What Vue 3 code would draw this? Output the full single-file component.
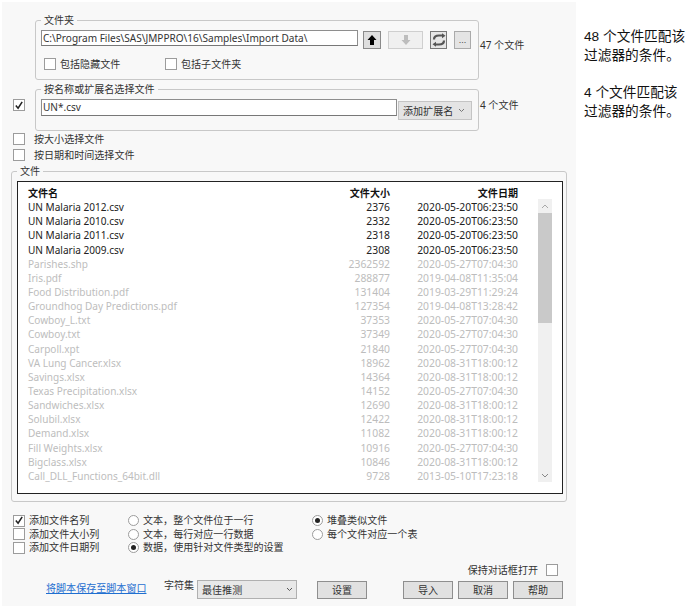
<script setup>
const dark = [
  ['UN Malaria 2012.csv', '2376', '2020-05-20T06:23:50'],
  ['UN Malaria 2010.csv', '2332', '2020-05-20T06:23:50'],
  ['UN Malaria 2011.csv', '2318', '2020-05-20T06:23:50'],
  ['UN Malaria 2009.csv', '2308', '2020-05-20T06:23:50'],
]
const grey = [
  ['Parishes.shp', '2362592', '2020-05-27T07:04:30'],
  ['Iris.pdf', '288877', '2019-04-08T11:35:04'],
  ['Food Distribution.pdf', '131404', '2019-03-29T11:29:24'],
  ['Groundhog Day Predictions.pdf', '127354', '2019-04-08T13:28:42'],
  ['Cowboy_L.txt', '37353', '2020-05-27T07:04:30'],
  ['Cowboy.txt', '37349', '2020-05-27T07:04:30'],
  ['Carpoll.xpt', '21840', '2020-05-27T07:04:30'],
  ['VA Lung Cancer.xlsx', '18962', '2020-08-31T18:00:12'],
  ['Savings.xlsx', '14364', '2020-08-31T18:00:12'],
  ['Texas Precipitation.xlsx', '14152', '2020-05-27T07:04:30'],
  ['Sandwiches.xlsx', '12690', '2020-08-31T18:00:12'],
  ['Solubil.xlsx', '12422', '2020-08-31T18:00:12'],
  ['Demand.xlsx', '11082', '2020-08-31T18:00:12'],
  ['Fill Weights.xlsx', '10916', '2020-05-27T07:04:30'],
  ['Bigclass.xlsx', '10846', '2020-08-31T18:00:12'],
  ['Call_DLL_Functions_64bit.dll', '9728', '2013-05-10T17:23:18'],
]
</script>

<template>
  <div class="page">
    <main class="panel">
      <div class="top-row">
        <section class="group folder">
          <span class="legend">文件夹</span>
          <div class="path-row">
            <div class="input path">C:\Program Files\SAS\JMPPRO\16\Samples\Import Data\</div>
            <button class="tool up">
              <svg width="12" height="12" viewBox="0 0 12 12"><path d="M6 1 1.500 6H4v5h4V6h2.500z" fill="#000" /></svg>
            </button>
            <button class="tool down">
              <svg width="12" height="12" viewBox="0 0 12 12"><path d="M4 1h4v5h2.500L6 11 1.500 6H4z" fill="#bdbdbd" /></svg>
            </button>
            <button class="tool refresh">
              <svg width="14" height="14" viewBox="0 0 14 14" fill="none">
                <path d="M2 6.500C2 3.500 4.300 2.500 7 2.500h4" stroke="#555" stroke-width="2.200" />
                <path d="M12 7.500c0 3-2.300 4-5 4H3" stroke="#555" stroke-width="2.200" />
                <path d="M10 0.200 13.500 2.700 10 5.200zM4 8.800.5 11.300 4 13.800z" fill="#555" />
              </svg>
            </button>
            <button class="tool more">...</button>
          </div>
          <div class="hidden-row">
            <span class="opt"><i class="check"></i>包括隐藏文件</span>
            <span class="opt"><i class="check"></i>包括子文件夹</span>
          </div>
        </section>
        <span class="count first">47 个文件</span>
      </div>

      <div class="top-row name-row">
        <i class="check outer-check on">
          <svg width="11" height="11" viewBox="0 0 11 11"><path d="M2 5.500 4.500 8.500 9 1.500" fill="none" stroke="#222" stroke-width="1.700" /></svg>
        </i>
        <section class="group name">
          <span class="legend">按名称或扩展名选择文件</span>
          <div class="name-inner">
            <div class="input pattern">UN*.csv</div>
            <div class="ext-select">添加扩展名<svg width="7" height="5" viewBox="0 0 7 5"><path d="M1 1l2.500 2.500L6 1" fill="none" stroke="#777" /></svg></div>
          </div>
        </section>
        <span class="count second">4 个文件</span>
      </div>

      <div class="line size-line"><i class="check"></i>按大小选择文件</div>
      <div class="line date-line"><i class="check"></i>按日期和时间选择文件</div>

      <section class="group files">
        <span class="legend">文件</span>
        <div class="list">
          <div class="table">
            <div class="row head"><span>文件名</span><span class="num">文件大小</span><span class="num">文件日期</span></div>
            <div v-for="r in dark" :key="r[0]" class="row"><span>{{ r[0] }}</span><span class="num">{{ r[1] }}</span><span class="num">{{ r[2] }}</span></div>
            <div v-for="r in grey" :key="r[0]" class="row dim"><span>{{ r[0] }}</span><span class="num">{{ r[1] }}</span><span class="num">{{ r[2] }}</span></div>
          </div>
          <div class="scrollbar">
            <div class="arrow"><svg width="8" height="5" viewBox="0 0 8 5"><path d="M1 4l3-3 3 3" fill="none" stroke="#a8a8a8" /></svg></div>
            <div class="thumb"></div>
            <div class="rest"></div>
            <div class="arrow"><svg width="8" height="5" viewBox="0 0 8 5"><path d="M1 1l3 3 3-3" fill="none" stroke="#888" /></svg></div>
          </div>
        </div>
      </section>

      <div class="options">
        <div class="col col-a">
          <div class="opt-line"><i class="check on"><svg width="11" height="11" viewBox="0 0 11 11"><path d="M2 5.500 4.500 8.500 9 1.500" fill="none" stroke="#222" stroke-width="1.700" /></svg></i>添加文件名列</div>
          <div class="opt-line"><i class="check"></i>添加文件大小列</div>
          <div class="opt-line"><i class="check"></i>添加文件日期列</div>
        </div>
        <div class="col col-b">
          <div class="opt-line"><i class="radio"></i>文本，整个文件位于一行</div>
          <div class="opt-line"><i class="radio"></i>文本，每行对应一行数据</div>
          <div class="opt-line"><i class="radio on"></i>数据，使用针对文件类型的设置</div>
        </div>
        <div class="col col-c">
          <div class="opt-line"><i class="radio on"></i>堆叠类似文件</div>
          <div class="opt-line"><i class="radio"></i>每个文件对应一个表</div>
        </div>
      </div>

      <div class="keep"><span>保持对话框打开</span><i class="check"></i></div>

      <div class="footer">
        <a class="link">将脚本保存至脚本窗口</a>
        <span class="charset-label">字符集</span>
        <div class="charset">最佳推测<svg width="7" height="5" viewBox="0 0 7 5"><path d="M1 1l2.500 2.500L6 1" fill="none" stroke="#555" /></svg></div>
        <button class="btn settings">设置</button>
        <button class="btn import">导入</button>
        <button class="btn">取消</button>
        <button class="btn">帮助</button>
      </div>
    </main>

    <aside class="notes">
      <p>48 个文件匹配该<br />过滤器的条件。</p>
      <p>4 个文件匹配该<br />过滤器的条件。</p>
    </aside>
  </div>
</template>

<style scoped>
.page {
  width: 687px;
  height: 606px;
  background: #fff;
  display: flex;
  align-items: flex-start;
  box-sizing: border-box;
  padding: 2px 0 0 2px;
  overflow: hidden;
  font-family: "Noto Sans", "Noto Sans CJK SC", sans-serif;
  font-size: 10.05px;
  color: #333;
}
.panel {
  width: 574px;
  height: 604px;
  background: #f8f8f8;
  flex: none;
  box-sizing: border-box;
  padding-top: 18px;
}
.notes {
  margin: 25px 0 0 8px;
  width: 103px;
  font-size: 13.7px;
  line-height: 19px;
  color: #111;
  font-family: "Liberation Sans", "Noto Sans CJK SC", sans-serif;
}
.notes p { margin: 0 0 18px; white-space: nowrap; }
.top-row { display: flex; align-items: flex-start; }
.group {
  position: relative;
  box-sizing: border-box;
  border: 1px solid #c8c8c8;
  border-radius: 3px;
}
.legend {
  position: absolute;
  top: -7px;
  left: 5px;
  line-height: 13px;
  padding: 0 3px;
  background: #f8f8f8;
  white-space: nowrap;
  color: #333;
}
.folder {
  margin-left: 33px;
  width: 444px;
  height: 60px;
  padding: 9px 0 0 5px;
}
.path-row { display: flex; align-items: flex-start; }
.input {
  box-sizing: border-box;
  background: #fff;
  border: 1px solid #8e8e8e;
  border-bottom-color: #777;
  line-height: 14px;
  white-space: nowrap;
  color: #333;
}
.path { width: 317px; height: 16px; padding-left: 1px; }
.tool {
  box-sizing: border-box;
  height: 18px;
  margin: 1px 0 0;
  padding: 0;
  border: 1px solid #9a9a9a;
  background: #dedede;
  display: flex;
  align-items: center;
  justify-content: center;
}
.up { width: 18px; margin-left: 5px; border-color: #8a8a8a; }
.down { width: 35px; margin-left: 7px; background: #f0f0f0; border-color: #cfcfcf; }
.refresh { width: 17px; margin-left: 7px; border-color: #777; background: #e6e6e6; }
.more { width: 17px; margin-left: 7px; font: 9px "Liberation Sans", sans-serif; color: #444; border-color: #aaa; background: #e4e4e4; }
.hidden-row { display: flex; margin: 8px 0 0 3px; }
.opt { width: 121px; display: flex; align-items: center; line-height: 14px; white-space: nowrap; }
.check {
  display: inline-flex;
  align-items: center;
  justify-content: center;
  box-sizing: border-box;
  width: 12px;
  height: 12px;
  flex: none;
  border: 1px solid #9c9c9c;
  background: #fff;
  margin-right: 4px;
}
.count { margin-left: 1px; white-space: nowrap; line-height: 14px; }
.first { margin-top: 18px; }
.name-row { margin-top: 9px; }
.outer-check { margin: 10px 10px 0 11px; }
.name {
  width: 444px;
  height: 42px;
  padding: 9px 0 0 5px;
}
.name-inner { display: flex; align-items: flex-start; }
.pattern { width: 356px; height: 17px; padding-left: 1px; }
.ext-select {
  box-sizing: border-box;
  width: 74px;
  height: 19px;
  margin: 2px 0 0 1px;
  background: #e4e4e4;
  border: 1px solid #c4c4c4;
  display: flex;
  align-items: center;
  justify-content: space-between;
  padding: 0 6px 0 4px;
  white-space: nowrap;
}
.second { margin-top: 9px; }
.line { display: flex; align-items: center; line-height: 14px; margin-left: 11px; white-space: nowrap; }
.line .check { margin-right: 9px; }
.size-line { margin-top: 1px; }
.date-line { margin-top: 2px; }
.files {
  margin: 9px 0 0 9px;
  width: 556px;
  height: 331px;
  padding: 9px 0 0 5px;
}
.list {
  box-sizing: border-box;
  width: 546px;
  height: 313px;
  background: #fff;
  border: 1px solid #222;
  display: flex;
  align-items: flex-start;
}
.table { width: 520px; padding-top: 4px; }
.row {
  display: grid;
  grid-template-columns: 200px 162px 128px;
  padding-left: 10px;
  height: 14.15px;
  line-height: 14.15px;
  color: #222;
  white-space: nowrap;
}
.head { font-weight: 700; color: #111; }
.dim { color: #bdbdbd; }
.num { text-align: right; font-size: 10.35px; }
.head .num { font-size: 10.05px; }
.scrollbar {
  width: 14px;
  height: 283px;
  margin-top: 17px;
  background: #f0f0f0;
  display: flex;
  flex-direction: column;
}
.arrow { height: 14px; flex: none; display: flex; align-items: center; justify-content: center; }
.thumb { height: 110px; flex: none; background: #c9c9c9; }
.rest { flex: 1; }
.options { display: flex; margin: 12px 0 0 11px; align-items: flex-start; }
.col-a { width: 115px; }
.col-b { width: 184px; }
.opt-line { display: flex; align-items: center; height: 13.5px; line-height: 13.5px; white-space: nowrap; }
.radio {
  box-sizing: border-box;
  width: 11px;
  height: 11px;
  border-radius: 50%;
  border: 1px solid #9c9c9c;
  background: #fff;
  margin-right: 4px;
  flex: none;
  position: relative;
}
.radio.on::after {
  content: "";
  position: absolute;
  inset: 2px;
  border-radius: 50%;
  background: #222;
}
.keep {
  display: flex;
  justify-content: flex-end;
  align-items: center;
  margin: 8px 0 0;
  width: 556px;
  height: 14px;
  white-space: nowrap;
}
.keep .check { margin: 0 0 0 8px; }
.footer { display: flex; align-items: flex-start; margin-top: 3px; white-space: nowrap; }
.link { margin: 1px 0 0 44px; width: 100px; color: #1f6fd0; text-decoration: underline; line-height: 14px; }
.charset-label { margin: -2px 0 0 18px; width: 33px; line-height: 14px; }
.charset {
  box-sizing: border-box;
  width: 100px;
  height: 19px;
  background: #e8e8e8;
  border: 1px solid #b0b0b0;
  display: flex;
  align-items: center;
  justify-content: space-between;
  padding: 0 3px 0 4px;
}
.btn {
  box-sizing: border-box;
  width: 50px;
  height: 18px;
  margin: 1px 0 0 5px;
  padding: 0;
  background: #e1e1e1;
  border: 1px solid #8f8f8f;
  font: inherit;
  color: #333;
  line-height: 14px;
}
.settings { margin-left: 20px; }
.import { margin-left: 36px; }
</style>
